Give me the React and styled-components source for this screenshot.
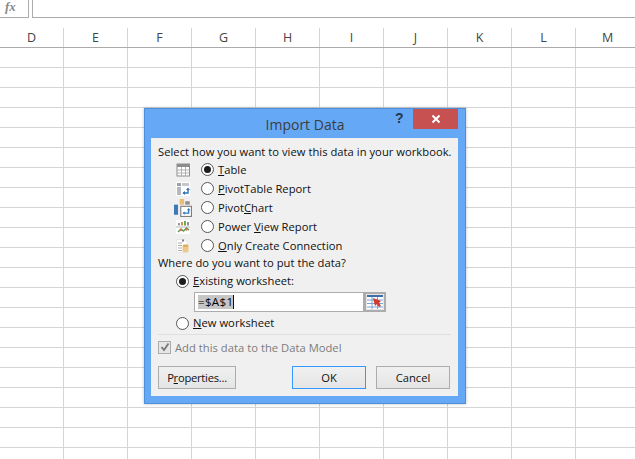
import React from "react";
import styled, { createGlobalStyle } from "styled-components";

const GlobalStyle = createGlobalStyle`
  html, body {
    margin: 0;
    padding: 0;
    background: #fff;
  }
  body {
    width: 635px;
    height: 459px;
    overflow: hidden;
    font-family: "Open Sans", "Noto Sans", sans-serif;
  }
`;

const columns = ["D", "E", "F", "G", "H", "I", "J", "K", "L", "M"];

const Sheet = styled.div`
  position: relative;
  width: 635px;
  height: 459px;
  overflow: hidden;
  background: #fff;
`;
const FormulaBar = styled.div`
  display: flex;
  height: 18px;
  gap: 3px;
`;
const FxBox = styled.div`
  width: 28px;
  height: 17px;
  border-right: 1px solid #ababab;
  border-bottom: 1px solid #ababab;
  font-family: "Liberation Serif", serif;
  font-style: italic;
  font-weight: 700;
  font-size: 13px;
  line-height: 13px;
  color: #8a8a8a;
  text-indent: 5px;
`;
const FormulaInput = styled.div`
  flex: 1;
  height: 17px;
  border-left: 1px solid #ababab;
  border-bottom: 1px solid #ababab;
`;
const HeaderRow = styled.div`
  display: grid;
  grid-template-columns: repeat(10, 64px) 1fr;
  height: 19px;
  margin-top: 10px;
  border-bottom: 1px solid #ababab;
`;
const HeaderCell = styled.div`
  font-size: 12.5px;
  line-height: 19px;
  text-align: center;
  color: #444;
  border-right: 1px solid ${(p) => (p.$last ? "transparent" : "#d4d4d4")};
  box-sizing: border-box;
`;
const Row = styled.div`
  display: grid;
  grid-template-columns: repeat(10, 64px) 1fr;
  height: 20px;
`;
const Cell = styled.div`
  box-sizing: border-box;
  border-right: 1px solid #d4d4d4;
  border-bottom: 1px solid #d4d4d4;
  &:last-child {
    border-right: 0;
  }
`;

const Dialog = styled.div`
  position: absolute;
  left: 144px;
  top: 108px;
  width: 322px;
  height: 296px;
  box-sizing: border-box;
  background: #65a9f6;
  border: 1px solid #4f8ed8;
  box-shadow: 0 0 3px rgba(0, 0, 0, 0.25);
  display: flex;
  flex-direction: column;
  padding: 0 7px 7px 6px;
`;
const TitleBar = styled.div`
  position: relative;
  height: 29px;
  flex: none;
  display: flex;
  justify-content: center;
  align-items: center;
  font-size: 14px;
  color: #3d3d3d;
  padding: 1px 0 0 1px;
  box-sizing: border-box;
`;
const HelpMark = styled.span`
  position: absolute;
  left: 244px;
  top: 0;
  font-family: "Liberation Sans", sans-serif;
  font-size: 14px;
  line-height: 18px;
  font-weight: 700;
  color: #27364a;
`;
const CloseButton = styled.div`
  position: absolute;
  right: 0;
  top: 0;
  width: 45px;
  height: 20px;
  background: #c75050;
  display: flex;
  align-items: center;
  justify-content: center;
`;
const Panel = styled.div`
  flex: 1;
  background: #f0f0f0;
  padding: 6px 7px 0 7px;
  font-size: 11.2px;
  color: #111;
  letter-spacing: 0.03px;
  display: flex;
  flex-direction: column;
`;
const Line = styled.div`
  line-height: 16px;
  height: 16px;
  white-space: nowrap;
`;
const ViewList = styled.div`
  display: flex;
  flex-direction: column;
`;
const ViewRow = styled.div`
  display: grid;
  grid-template-columns: 16px 13px 1fr;
  height: 19px;
  align-items: center;
  padding-left: 17px;
`;
const RowIcon = styled.svg`
  width: ${(p) => p.$size || 16}px;
  height: ${(p) => p.$size || 16}px;
  margin-left: ${(p) => p.$shift || 0}px;
  display: block;
`;
const Radio = styled.span`
  width: 11px;
  height: 11px;
  border: 1px solid #555;
  border-radius: 50%;
  background: #fff;
  display: flex;
  align-items: center;
  justify-content: center;
  margin-left: ${(p) => p.$indent || 0}px;
  flex: none;
  &::after {
    content: "";
    width: 7px;
    height: 7px;
    border-radius: 50%;
    background: ${(p) => (p.$checked ? "#1c1c1c" : "transparent")};
  }
`;
const RadioLabel = styled.span`
  margin-left: ${(p) => p.$gap ?? 10}px;
  white-space: nowrap;
  line-height: 16px;
`;
const PlainRow = styled.div`
  display: flex;
  align-items: center;
  height: 20px;
  padding-left: 18px;
`;
const RefRow = styled.div`
  display: flex;
  height: 20px;
  margin: 1px 0 1px 36px;
`;
const RefInput = styled.div`
  width: 170px;
  height: 20px;
  box-sizing: border-box;
  border: 1px solid #acacac;
  background: #fff;
  padding: 2px 0 0 3px;
  line-height: 14px;
  display: flex;
  align-items: flex-start;
`;
const Selected = styled.span`
  background: #c6c6c6;
  height: 14px;
  font-size: 11.6px;
  letter-spacing: 0.3px;
  color: #000;
`;
const Caret = styled.span`
  width: 1px;
  height: 14px;
  background: #111;
`;
const RefButton = styled.div`
  width: 22px;
  height: 20px;
  box-sizing: border-box;
  border: 2px solid #acacac;
  background: #e6e6e6;
  display: flex;
  align-items: center;
  justify-content: center;
`;
const Divider = styled.div`
  height: 1px;
  background: #dfdfdf;
  margin: 1px 0 4px;
`;
const CheckRow = styled.div`
  display: flex;
  align-items: center;
  height: 16px;
  gap: 4px;
  color: #7c7c7c;
`;
const CheckBox = styled.span`
  width: 11px;
  height: 11px;
  border: 1px solid #acacac;
  background: #e6e6e6;
  display: flex;
  align-items: center;
  justify-content: center;
`;
const ButtonRow = styled.div`
  display: flex;
  margin-top: 11px;
`;
const Button = styled.div`
  width: ${(p) => p.$w}px;
  height: 23px;
  margin-left: ${(p) => p.$ml || 0}px;
  box-sizing: border-box;
  border: 1px solid ${(p) => (p.$primary ? "#3399ff" : "#acacac")};
  background: linear-gradient(#f0f0f0, #e5e5e5);
  display: flex;
  align-items: center;
  justify-content: center;
  color: #111;
  letter-spacing: ${(p) => p.$tracking || 0}px;
`;

const TableIcon = () => (
  <RowIcon viewBox="0 0 16 16">
    <rect x="2" y="2" width="12.5" height="12" fill="#fff" stroke="#8c8c8c" />
    <rect x="2" y="2" width="12.5" height="3" fill="#8c8c8c" />
    <path d="M6.5 5v9M10.5 5v9M2 8h12.5M2 11h12.5" stroke="#b0b0b0" />
  </RowIcon>
);
const PivotTableIcon = () => (
  <RowIcon viewBox="0 0 16 16">
    <rect x="1" y="1" width="14" height="14" fill="#fff" />
    <rect x="2" y="2" width="4" height="3" fill="#9aa0a6" />
    <rect x="2" y="6" width="4" height="8" fill="#b5b9bd" />
    <rect x="7" y="2" width="7" height="3" fill="#c5c8cb" />
    <path d="M8 12h5V8" fill="none" stroke="#2f75b5" strokeWidth="1.4" />
    <path d="M11 9l2-2.5L15 9zM10 10v4l-2.5-2z" fill="#2f75b5" />
  </RowIcon>
);
const PivotChartIcon = () => (
  <RowIcon viewBox="0 0 16 16" $size={18} $shift={-1}>
    <rect x="5" y="0" width="4" height="5" fill="#e9bd75" />
    <rect x="10" y="2" width="4" height="3" fill="#8f8f8f" />
    <rect x="0" y="5" width="3.6" height="9" fill="#3d78bb" />
    <rect x="6" y="6.5" width="9.5" height="9" fill="#fff" stroke="#7f7f7f" />
    <path d="M8.5 12.5h4.5V9.5" fill="none" stroke="#2f75b5" strokeWidth="1.2" />
    <path d="M11.5 10l1.5-2 1.5 2zM9.5 11v3l-2-1.5z" fill="#2f75b5" />
  </RowIcon>
);
const PowerViewIcon = () => (
  <RowIcon viewBox="0 0 16 16">
    <rect x="1" y="1" width="14" height="14" fill="#fff" />
    <rect x="3" y="4" width="2" height="2.5" fill="#9a9a9a" />
    <rect x="6" y="3" width="2" height="3.5" fill="#c9973f" />
    <rect x="9" y="2" width="2" height="4.5" fill="#6fa26a" />
    <rect x="12" y="3" width="2" height="3.5" fill="#8f8f8f" />
    <path d="M1 8h14" stroke="#b8b8b8" />
    <path d="M3 13l3-3 2.5 2 3-3 2.5 2" fill="none" stroke="#5f9b5a" strokeWidth="1.5" />
    <circle cx="6" cy="11" r="1.2" fill="#d2793d" />
    <circle cx="11.5" cy="10.5" r="1.2" fill="#d2793d" />
  </RowIcon>
);
const ConnectionIcon = () => (
  <RowIcon viewBox="0 0 16 16">
    <path d="M1.5 1.5h8l3 3v10h-11z" fill="#fff" stroke="#e6e6e6" />
    <path d="M3 5h4M3 7.5h4M3 10h4M3 12.5h4" stroke="#a8a8a8" />
    <ellipse cx="10.5" cy="8" rx="3" ry="1.4" fill="#d9a94f" />
    <path d="M7.5 8v5.5c0 1 6 1 6 0V8c0 1-6 1-6 0z" fill="#eec888" />
    <rect x="7" y="1.5" width="2" height="2" fill="#7f7f7f" />
  </RowIcon>
);

const viewOptions = [
  { icon: <TableIcon />, label: <><u>T</u>able</>, checked: true },
  { icon: <PivotTableIcon />, label: <><u>P</u>ivotTable Report</> },
  { icon: <PivotChartIcon />, label: <>Pivot<u>C</u>hart</> },
  { icon: <PowerViewIcon />, label: <>Power <u>V</u>iew Report</> },
  { icon: <ConnectionIcon />, label: <><u>O</u>nly Create Connection</> },
];

const App = () => {
  return (
    <Sheet>
      <GlobalStyle />
      <FormulaBar>
        <FxBox>fx</FxBox>
        <FormulaInput />
      </FormulaBar>
      <HeaderRow>
        {columns.map((c, i) => (
          <HeaderCell key={c} $last={i === columns.length - 1}>
            {c}
          </HeaderCell>
        ))}
      </HeaderRow>
      {Array.from({ length: 21 }).map((_, r) => (
        <Row key={r}>
          {columns.map((c) => (
            <Cell key={c} />
          ))}
        </Row>
      ))}
      <Dialog>
        <TitleBar>
          Import Data
          <HelpMark>?</HelpMark>
          <CloseButton>
            <svg width="10" height="10" viewBox="0 0 10 10">
              <path d="M1.5 1.5l7 7M8.5 1.5l-7 7" stroke="#fff" strokeWidth="2" />
            </svg>
          </CloseButton>
        </TitleBar>
        <Panel>
          <Line>Select how you want to view this data in your workbook.</Line>
          <ViewList>
            {viewOptions.map((o, i) => (
              <ViewRow key={i}>
                {o.icon}
                <Radio $indent={10} $checked={o.checked} />
                <RadioLabel $gap={14}>{o.label}</RadioLabel>
              </ViewRow>
            ))}
          </ViewList>
          <Line>Where do you want to put the data?</Line>
          <PlainRow>
            <Radio $checked />
            <RadioLabel $gap={4}><u>E</u>xisting worksheet:</RadioLabel>
          </PlainRow>
          <RefRow>
            <RefInput>
              <Selected>=$A$1</Selected>
              <Caret />
            </RefInput>
            <RefButton>
              <svg width="16" height="14" viewBox="0 0 16 14">
                <rect x="0" y="0" width="16" height="14" fill="#fff" />
                <rect x="0" y="0" width="16" height="2" fill="#3f6fa8" />
                <path d="M0 5h16M0 8.5h16M0 12h16M5 2v12M10.5 2v12" stroke="#7ba3cf" />
                <path d="M6 3l8 3-2 2 2 3-2 1-2-3-2 2z" fill="#d4382c" />
              </svg>
            </RefButton>
          </RefRow>
          <PlainRow>
            <Radio />
            <RadioLabel $gap={4}><u>N</u>ew worksheet</RadioLabel>
          </PlainRow>
          <Divider />
          <CheckRow>
            <CheckBox>
              <svg width="10" height="10" viewBox="0 0 10 10">
                <path d="M1.5 5l2.5 3 4.5-6.5" fill="none" stroke="#777" strokeWidth="1.8" />
              </svg>
            </CheckBox>
            Add this data to the Data Model
          </CheckRow>
          <ButtonRow>
            <Button $w={78} $tracking={-0.25}>P<u>r</u>operties...</Button>
            <Button $w={74} $ml={56} $primary>OK</Button>
            <Button $w={74} $ml={10}>Cancel</Button>
          </ButtonRow>
        </Panel>
      </Dialog>
    </Sheet>
  );
};

export default App;
